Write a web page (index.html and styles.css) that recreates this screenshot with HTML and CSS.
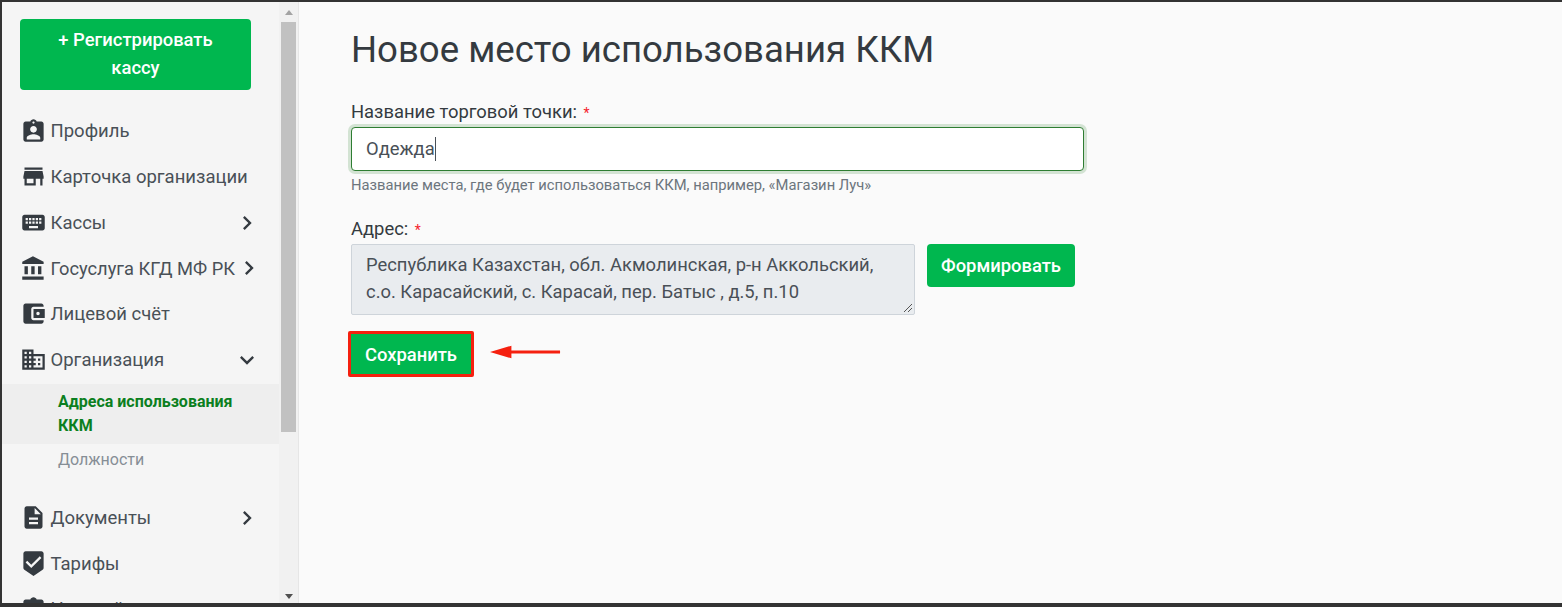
FILE: index.html
```html
<!DOCTYPE html>
<html lang="ru">
<head>
    <meta charset="UTF-8">
    <title>Новое место использования ККМ</title>
    <link rel="stylesheet" href="styles.css">
</head>
<body>

    <div class="window">
        <aside class="sidebar">
            <button class="register-btn">+ Регистрировать кассу</button>

            <nav class="menu">
                <a class="menu-item">
                    <svg class="icon" viewBox="0 0 24 24"><path d="M19 3h-4.18C14.4 1.84 13.3 1 12 1c-1.3 0-2.4.84-2.82 2H5c-1.1 0-2 .9-2 2v14c0 1.1.9 2 2 2h14c1.1 0 2-.9 2-2V5c0-1.1-.9-2-2-2zm-7 0c.55 0 1 .45 1 1s-.45 1-1 1-1-.45-1-1 .45-1 1-1zm0 4c1.66 0 3 1.34 3 3s-1.34 3-3 3-3-1.34-3-3 1.34-3 3-3zm6 12H6v-1.4c0-2 4-3.1 6-3.1s6 1.1 6 3.1V19z"/></svg>
                    <span>Профиль</span>
                </a>
                <a class="menu-item">
                    <svg class="icon" viewBox="0 0 24 24"><path d="M20 4H4v2h16V4zm1 10v-2l-1-5H4l-1 5v2h1v6h10v-6h4v6h2v-6h1zm-9 4H6v-4h6v4z"/></svg>
                    <span>Карточка организации</span>
                </a>
                <a class="menu-item">
                    <svg class="icon" viewBox="0 0 24 24"><path d="M20 5H4c-1.1 0-1.99.9-1.99 2L2 17c0 1.1.9 2 2 2h16c1.1 0 2-.9 2-2V7c0-1.1-.9-2-2-2zm-9 3h2v2h-2V8zm0 3h2v2h-2v-2zM8 8h2v2H8V8zm0 3h2v2H8v-2zm-1 2H5v-2h2v2zm0-3H5V8h2v2zm9 7H8v-2h8v2zm0-4h-2v-2h2v2zm0-3h-2V8h2v2zm3 3h-2v-2h2v2zm0-3h-2V8h2v2z"/></svg>
                    <span>Кассы</span>
                    <svg class="chevron" viewBox="0 0 24 24"><path d="M10 6L8.59 7.41 13.17 12l-4.58 4.59L10 18l6-6z"/></svg>
                </a>
                <a class="menu-item">
                    <svg class="icon" viewBox="0 0 24 24"><path d="M4 10v7h3v-7H4zm6 0v7h3v-7h-3zM2 22h19v-3H2v3zm14-12v7h3v-7h-3zm-4.5-9L2 6v2h19V6l-9.5-5z"/></svg>
                    <span class="long">Госуслуга КГД МФ РК</span>
                    <svg class="chevron" viewBox="0 0 24 24"><path d="M10 6L8.59 7.41 13.17 12l-4.58 4.59L10 18l6-6z"/></svg>
                </a>
                <a class="menu-item">
                    <svg class="icon" viewBox="0 0 24 24"><path d="M21 18v1c0 1.1-.9 2-2 2H5c-1.11 0-2-.9-2-2V5c0-1.1.89-2 2-2h14c1.1 0 2 .9 2 2v1h-9c-1.11 0-2 .9-2 2v8c0 1.1.89 2 2 2h9zm-9-2h10V8H12v8zm4-2.5c-.83 0-1.5-.67-1.5-1.5s.67-1.5 1.5-1.5 1.5.67 1.5 1.5-.67 1.5-1.5 1.5z"/></svg>
                    <span>Лицевой счёт</span>
                </a>
                <a class="menu-item">
                    <svg class="icon" viewBox="0 0 24 24"><path d="M12 7V3H2v18h20V7H12zM6 19H4v-2h2v2zm0-4H4v-2h2v2zm0-4H4V9h2v2zm0-4H4V5h2v2zm4 12H8v-2h2v2zm0-4H8v-2h2v2zm0-4H8V9h2v2zm0-4H8V5h2v2zm10 12h-8v-2h2v-2h-2v-2h2v-2h-2V9h8v10zm-2-8h-2v2h2v-2zm0 4h-2v2h2v-2z"/></svg>
                    <span>Организация</span>
                    <svg class="chevron" viewBox="0 0 24 24"><path d="M16.59 8.59L12 13.17 7.41 8.59 6 10l6 6 6-6z"/></svg>
                </a>

                <div class="submenu">
                    <a class="submenu-item active">Адреса использования ККМ</a>
                    <a class="submenu-item">Должности</a>
                </div>

                <a class="menu-item">
                    <svg class="icon" viewBox="0 0 24 24"><path d="M14 2H6c-1.1 0-1.99.9-1.99 2L4 20c0 1.1.89 2 1.99 2H18c1.1 0 2-.9 2-2V8l-6-6zm2 16H8v-2h8v2zm0-4H8v-2h8v2zm-3-5V3.5L18.5 9H13z"/></svg>
                    <span>Документы</span>
                    <svg class="chevron" viewBox="0 0 24 24"><path d="M10 6L8.59 7.41 13.17 12l-4.58 4.59L10 18l6-6z"/></svg>
                </a>
                <a class="menu-item">
                    <svg class="icon" viewBox="0 0 24 24"><path d="M19 1H5c-1.1 0-1.99.9-1.99 2L3 15.93c0 .69.35 1.3.88 1.66L12 23l8.11-5.41c.53-.36.88-.97.88-1.66L21 3c0-1.1-.9-2-2-2zm-9 15l-5-5 1.41-1.41L10 13.17l7.59-7.59L19 7l-9 9z"/></svg>
                    <span>Тарифы</span>
                </a>
                <a class="menu-item">
                    <svg class="icon" viewBox="0 0 24 24"><path d="M19 3h-4.18C14.4 1.84 13.3 1 12 1c-1.3 0-2.4.84-2.82 2H5c-1.1 0-2 .9-2 2v14c0 1.1.9 2 2 2h14c1.1 0 2-.9 2-2V5c0-1.1-.9-2-2-2z"/></svg>
                    <span>Настройки</span>
                </a>
            </nav>
        </aside>

        <div class="scrollbar">
            <span class="arrow-up"></span>
            <div class="track"><div class="thumb"></div></div>
            <span class="arrow-down"></span>
        </div>

        <main class="content">
            <h1>Новое место использования ККМ</h1>

            <div class="form">
                <div class="field">
                    <label>Название торговой точки: <span class="req">*</span></label>
                    <div class="input"><span class="caret">Одежда</span></div>
                    <small class="hint">Название места, где будет использоваться ККМ, например, «Магазин Луч»</small>
                </div>

                <div class="field">
                    <label>Адрес: <span class="req">*</span></label>
                    <div class="address-row">
                        <div class="textarea">Республика Казахстан, обл. Акмолинская, р-н Аккольский, с.о. Карасайский, с. Карасай, пер. Батыс , д.5, п.10
                            <svg class="grip" viewBox="0 0 10 10"><path d="M9 1L1 9M9 5L5 9" /></svg>
                        </div>
                        <button class="btn">Формировать</button>
                    </div>
                </div>

                <div class="save-row">
                    <button class="btn save">Сохранить</button>
                    <svg class="pointer" viewBox="0 0 74 14"><path d="M0 7L22 0.5V5.5H72V8.5H22V13.5z"/></svg>
                </div>
            </div>
        </main>
    </div>

</body>
</html>
```

FILE: styles.css
```css
* {
    box-sizing: border-box;
}
html, body {
    margin: 0;
    height: 100%;
}
body {
    font-family: Roboto, "Liberation Sans", sans-serif;
    background: #333;
    overflow: hidden;
}
.window {
    display: flex;
    height: 607px;
    padding: 2px 0 4px 2px;
}
.sidebar {
    width: 277px;
    flex: none;
    background: #f5f5f5;
    overflow: hidden;
    padding-top: 17px;
}
.register-btn {
    display: block;
    width: 231px;
    height: 71px;
    margin-left: 18px;
    padding: 4px 30px 6px;
    border: none;
    border-radius: 4px;
    background: #00b74f;
    color: #fff;
    font-family: inherit;
    font-size: 18.4px;
    font-weight: 500;
    line-height: 28px;
}
.menu {
    margin-top: 18.3px;
}
.menu-item {
    display: flex;
    align-items: center;
    height: 45.7px;
    padding-left: 17.5px;
    color: #495057;
    font-size: 18.5px;
}
.menu-item span {
    margin-left: 4px;
    white-space: nowrap;
}
.menu-item .long {
    font-size: 18.3px;
}
.icon {
    width: 27px;
    height: 27px;
    flex: none;
    fill: #343a40;
}
.chevron {
    width: 28px;
    height: 28px;
    flex: none;
    margin-left: auto;
    margin-right: 18px;
    fill: #343a40;
}
.submenu {
    margin-top: 1.7px;
    margin-bottom: 17px;
}
.submenu-item {
    display: block;
    padding: 4px 30px 6px 56px;
    font-size: 16px;
    line-height: 24px;
    color: #868e96;
}
.submenu-item.active {
    background: #eee;
    color: #0b7f20;
    font-weight: 700;
    padding: 6px 30px 6px 56px;
}
.scrollbar {
    width: 19px;
    flex: none;
    display: flex;
    flex-direction: column;
    align-items: center;
    background: #f1f1f1;
}
.arrow-up, .arrow-down {
    flex: none;
    width: 0;
    height: 0;
    border-left: 4px solid transparent;
    border-right: 4px solid transparent;
}
.arrow-up {
    margin: 8px 0 7px;
    border-bottom: 5px solid #a3a3a3;
}
.arrow-down {
    margin: 5px 0 4px;
    border-top: 5px solid #505050;
}
.track {
    flex: 1;
    width: 100%;
    padding: 0 2px;
}
.thumb {
    height: 410px;
    background: #c1c1c1;
}
.content {
    flex: 1;
    background: #fafafa;
    border-left: 1px solid #e6e6e6;
    padding: 0 0 0 52px;
}
h1 {
    margin: 26px 0 0;
    font-size: 36.6px;
    font-weight: 400;
    line-height: 43px;
    color: #343a40;
}
.form {
    width: 733px;
    margin-top: 29px;
}
.field {
    margin-bottom: 22px;
}
label {
    display: block;
    font-size: 18.4px;
    line-height: 24px;
    color: #343a40;
}
.req {
    margin-left: 2px;
    font-size: 14px;
    color: #f5222d;
}
.input {
    height: 44px;
    margin-top: 2px;
    padding: 0 14px;
    display: flex;
    align-items: center;
    background: #fff;
    border: 1.5px solid #2e7d32;
    border-radius: 4px;
    box-shadow: 0 0 0 3px #d3e3d3;
    color: #495057;
    font-size: 18.4px;
}
.caret {
    border-right: 1px solid #495057;
    line-height: 24px;
}
.hint {
    display: block;
    margin-top: 4px;
    font-size: 14.75px;
    line-height: 20px;
    color: #6c757d;
}
.address-row {
    display: flex;
    align-items: flex-start;
    gap: 12px;
    margin-top: 2px;
}
.textarea {
    position: relative;
    width: 564px;
    height: 71px;
    padding: 6px 14px;
    background: #e9ecef;
    border: 1px solid #ced4da;
    border-radius: 2px;
    color: #495057;
    font-size: 18.4px;
    line-height: 27px;
}
.grip {
    position: absolute;
    right: 1px;
    bottom: 1px;
    width: 10px;
    height: 10px;
    fill: none;
    stroke: #555;
    stroke-width: 1;
}
.btn {
    height: 43px;
    padding: 0 14px;
    border: none;
    border-radius: 4px;
    background: #00b74f;
    color: #fff;
    font-family: inherit;
    font-size: 18.4px;
    font-weight: 500;
}
.save-row {
    display: flex;
    align-items: flex-start;
    margin-top: -6px;
    margin-left: -3px;
}
.save {
    width: 126px;
    height: 46px;
    padding: 0;
    border: 3px solid #f5200f;
    border-radius: 2px;
}
.pointer {
    width: 72px;
    height: 14px;
    margin-top: 14px;
    margin-left: 16px;
    fill: #f5200f;
}
```
